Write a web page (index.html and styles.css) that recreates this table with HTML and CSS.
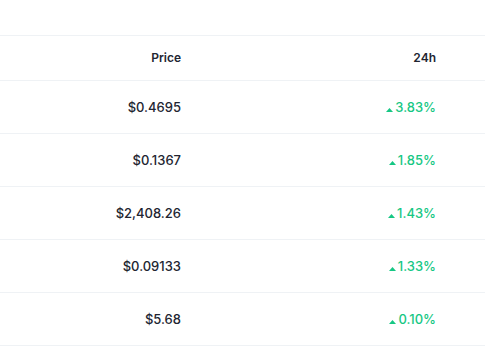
FILE: index.html
```html
<!DOCTYPE html>
<html lang="en">
<head>
<meta charset="utf-8">
<title>Prices</title>
<link rel="stylesheet" href="styles.css">
</head>
<body>
<div class="wrap">
  <div class="table">
    <div class="row head">
      <div class="cell price">Price</div>
      <div class="cell change">24h</div>
      <div class="cell rest"></div>
    </div>
    <div class="row">
      <div class="cell price">$0.4695</div>
      <div class="cell change up"><svg class="caret" width="7" height="4" viewBox="0 0 7 4"><polygon points="0,4 3.5,0 7,4"/></svg>3.83%</div>
      <div class="cell rest"></div>
    </div>
    <div class="row">
      <div class="cell price">$0.1367</div>
      <div class="cell change up"><svg class="caret" width="7" height="4" viewBox="0 0 7 4"><polygon points="0,4 3.5,0 7,4"/></svg>1.85%</div>
      <div class="cell rest"></div>
    </div>
    <div class="row">
      <div class="cell price">$2,408.26</div>
      <div class="cell change up"><svg class="caret" width="7" height="4" viewBox="0 0 7 4"><polygon points="0,4 3.5,0 7,4"/></svg>1.43%</div>
      <div class="cell rest"></div>
    </div>
    <div class="row">
      <div class="cell price">$0.09133</div>
      <div class="cell change up"><svg class="caret" width="7" height="4" viewBox="0 0 7 4"><polygon points="0,4 3.5,0 7,4"/></svg>1.33%</div>
      <div class="cell rest"></div>
    </div>
    <div class="row">
      <div class="cell price">$5.68</div>
      <div class="cell change up"><svg class="caret" width="7" height="4" viewBox="0 0 7 4"><polygon points="0,4 3.5,0 7,4"/></svg>0.10%</div>
      <div class="cell rest"></div>
    </div>
  </div>
</div>
</body>
</html>
```
FILE: styles.css
```css
html, body {
  margin: 0;
  padding: 0;
  background: #ffffff;
}
body {
  font-family: Inter, "Noto Sans", "Liberation Sans", sans-serif;
  color: #222531;
  width: 485px;
  height: 360px;
  overflow: hidden;
}
.wrap {
  padding-top: 35px;
}
.table {
  border-top: 1px solid #eff2f5;
}
.row {
  display: grid;
  grid-template-columns: 193px 255px 1fr;
  height: 52.1px;
  border-bottom: 1px solid #eff2f5;
  align-items: center;
}
.row.head {
  height: 43.5px;
}
.cell {
  text-align: right;
  padding-right: 12px;
  font-size: 13px;
  font-weight: 500;
  white-space: nowrap;
}
.head .cell {
  font-size: 12px;
  font-weight: 600;
}
.change.up {
  color: #16c784;
  font-size: 13px;
  display: flex;
  justify-content: flex-end;
  align-items: baseline;
}
.caret {
  fill: #16c784;
  margin-right: 2px;
  margin-bottom: 1px;
}
```
